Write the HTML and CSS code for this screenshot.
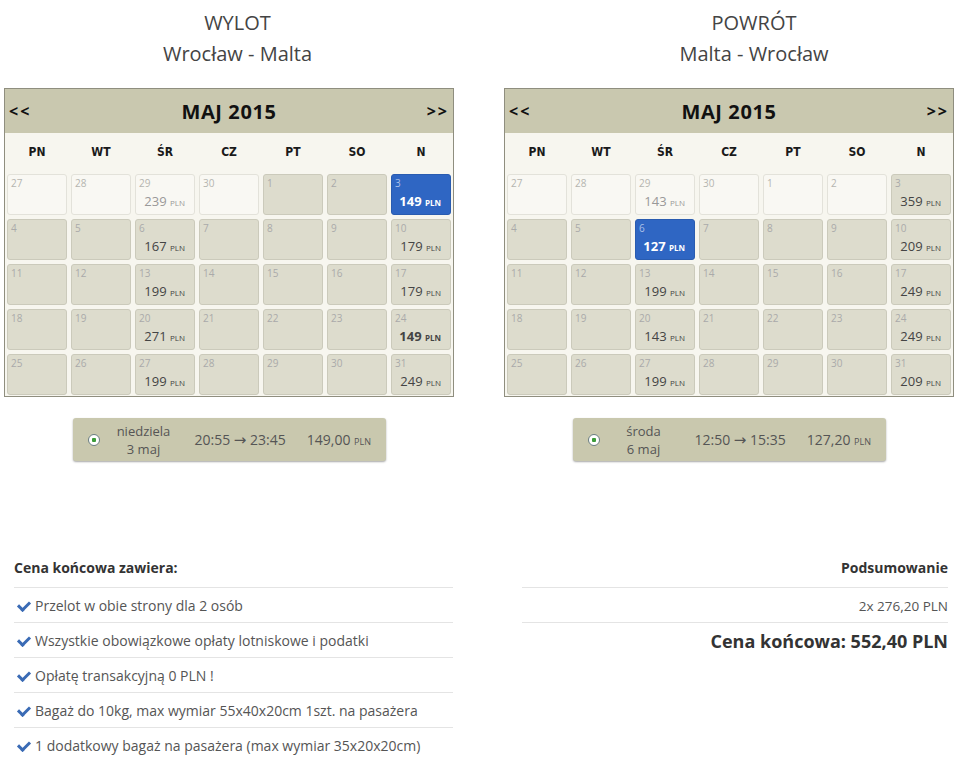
FILE: index.html
```html
<!DOCTYPE html>
<html lang="pl">
<head>
  <meta charset="UTF-8">
  <title>Rezerwacja lotu</title>
  <link rel="stylesheet" href="styles.css">
</head>
<body>

  <div class="flights">

    <!-- Wylot -->
    <div class="leg leg-out">
      <div class="leg-title">
        <div>WYLOT</div>
        <div>Wrocław - Malta</div>
      </div>
      <div class="calendar">
        <div class="cal-head">
          <span class="nav">&lt;&lt;</span>
          <span class="month">MAJ 2015</span>
          <span class="nav">&gt;&gt;</span>
        </div>
        <div class="days">
          <span>PN</span><span>WT</span><span>ŚR</span><span>CZ</span><span>PT</span><span>SO</span><span>N</span>
        </div>
        <div class="grid">
          <div class="cell off"><span class="num">27</span></div>
          <div class="cell off"><span class="num">28</span></div>
          <div class="cell off"><span class="num">29</span><span class="price">239 <small>PLN</small></span></div>
          <div class="cell off"><span class="num">30</span></div>
          <div class="cell"><span class="num">1</span></div>
          <div class="cell"><span class="num">2</span></div>
          <div class="cell sel"><span class="num">3</span><span class="price">149 <small>PLN</small></span></div>

          <div class="cell"><span class="num">4</span></div>
          <div class="cell"><span class="num">5</span></div>
          <div class="cell"><span class="num">6</span><span class="price">167 <small>PLN</small></span></div>
          <div class="cell"><span class="num">7</span></div>
          <div class="cell"><span class="num">8</span></div>
          <div class="cell"><span class="num">9</span></div>
          <div class="cell"><span class="num">10</span><span class="price">179 <small>PLN</small></span></div>

          <div class="cell"><span class="num">11</span></div>
          <div class="cell"><span class="num">12</span></div>
          <div class="cell"><span class="num">13</span><span class="price">199 <small>PLN</small></span></div>
          <div class="cell"><span class="num">14</span></div>
          <div class="cell"><span class="num">15</span></div>
          <div class="cell"><span class="num">16</span></div>
          <div class="cell"><span class="num">17</span><span class="price">179 <small>PLN</small></span></div>

          <div class="cell"><span class="num">18</span></div>
          <div class="cell"><span class="num">19</span></div>
          <div class="cell"><span class="num">20</span><span class="price">271 <small>PLN</small></span></div>
          <div class="cell"><span class="num">21</span></div>
          <div class="cell"><span class="num">22</span></div>
          <div class="cell"><span class="num">23</span></div>
          <div class="cell"><span class="num">24</span><span class="price cheap">149 <small>PLN</small></span></div>

          <div class="cell"><span class="num">25</span></div>
          <div class="cell"><span class="num">26</span></div>
          <div class="cell"><span class="num">27</span><span class="price">199 <small>PLN</small></span></div>
          <div class="cell"><span class="num">28</span></div>
          <div class="cell"><span class="num">29</span></div>
          <div class="cell"><span class="num">30</span></div>
          <div class="cell"><span class="num">31</span><span class="price">249 <small>PLN</small></span></div>
        </div>
      </div>

      <div class="flight">
        <span class="radio"></span>
        <span class="date"><span>niedziela</span><span>3 maj</span></span>
        <span class="time">20:55 <span class="arrow">&rarr;</span> 23:45</span>
        <span class="fare">149,00 <small>PLN</small></span>
      </div>
    </div>

    <!-- Powrot -->
    <div class="leg leg-back">
      <div class="leg-title">
        <div>POWRÓT</div>
        <div>Malta - Wrocław</div>
      </div>
      <div class="calendar">
        <div class="cal-head">
          <span class="nav">&lt;&lt;</span>
          <span class="month">MAJ 2015</span>
          <span class="nav">&gt;&gt;</span>
        </div>
        <div class="days">
          <span>PN</span><span>WT</span><span>ŚR</span><span>CZ</span><span>PT</span><span>SO</span><span>N</span>
        </div>
        <div class="grid">
          <div class="cell off"><span class="num">27</span></div>
          <div class="cell off"><span class="num">28</span></div>
          <div class="cell off"><span class="num">29</span><span class="price">143 <small>PLN</small></span></div>
          <div class="cell off"><span class="num">30</span></div>
          <div class="cell off"><span class="num">1</span></div>
          <div class="cell off"><span class="num">2</span></div>
          <div class="cell"><span class="num">3</span><span class="price">359 <small>PLN</small></span></div>

          <div class="cell"><span class="num">4</span></div>
          <div class="cell"><span class="num">5</span></div>
          <div class="cell sel"><span class="num">6</span><span class="price">127 <small>PLN</small></span></div>
          <div class="cell"><span class="num">7</span></div>
          <div class="cell"><span class="num">8</span></div>
          <div class="cell"><span class="num">9</span></div>
          <div class="cell"><span class="num">10</span><span class="price">209 <small>PLN</small></span></div>

          <div class="cell"><span class="num">11</span></div>
          <div class="cell"><span class="num">12</span></div>
          <div class="cell"><span class="num">13</span><span class="price">199 <small>PLN</small></span></div>
          <div class="cell"><span class="num">14</span></div>
          <div class="cell"><span class="num">15</span></div>
          <div class="cell"><span class="num">16</span></div>
          <div class="cell"><span class="num">17</span><span class="price">249 <small>PLN</small></span></div>

          <div class="cell"><span class="num">18</span></div>
          <div class="cell"><span class="num">19</span></div>
          <div class="cell"><span class="num">20</span><span class="price">143 <small>PLN</small></span></div>
          <div class="cell"><span class="num">21</span></div>
          <div class="cell"><span class="num">22</span></div>
          <div class="cell"><span class="num">23</span></div>
          <div class="cell"><span class="num">24</span><span class="price">249 <small>PLN</small></span></div>

          <div class="cell"><span class="num">25</span></div>
          <div class="cell"><span class="num">26</span></div>
          <div class="cell"><span class="num">27</span><span class="price">199 <small>PLN</small></span></div>
          <div class="cell"><span class="num">28</span></div>
          <div class="cell"><span class="num">29</span></div>
          <div class="cell"><span class="num">30</span></div>
          <div class="cell"><span class="num">31</span><span class="price">209 <small>PLN</small></span></div>
        </div>
      </div>

      <div class="flight">
        <span class="radio"></span>
        <span class="date"><span>środa</span><span>6 maj</span></span>
        <span class="time">12:50 <span class="arrow">&rarr;</span> 15:35</span>
        <span class="fare">127,20 <small>PLN</small></span>
      </div>
    </div>

  </div>

  <!-- Podsumowanie ceny -->
  <div class="summary">
    <div class="includes">
      <div class="sum-head">Cena końcowa zawiera:</div>
      <ul class="checks">
        <li>Przelot w obie strony dla 2 osób</li>
        <li>Wszystkie obowiązkowe opłaty lotniskowe i podatki</li>
        <li>Opłatę transakcyjną 0 PLN !</li>
        <li>Bagaż do 10kg, max wymiar 55x40x20cm 1szt. na pasażera</li>
        <li>1 dodatkowy bagaż na pasażera (max wymiar 35x20x20cm)</li>
      </ul>
    </div>
    <div class="totals">
      <div class="sum-head">Podsumowanie</div>
      <div class="per-person">2x 276,20 PLN</div>
      <div class="total">Cena końcowa: 552,40 PLN</div>
    </div>
  </div>

</body>
</html>
```

FILE: styles.css
```css
body {
  margin: 0;
  font-family: "Open Sans", sans-serif;
  color: #555;
  background: #fff;
}

.flights {
  display: flex;
}

.leg {
  width: 450px;
}

.leg-out {
  margin-left: 4px;
}

.leg-back {
  margin-left: 50px;
}

.leg-title {
  text-align: center;
  font-size: 20px;
  line-height: 31px;
  color: #444;
  padding-top: 7px;
  height: 81px;
}

.leg-out .leg-title {
  padding-left: 17px;
}

.leg-back .leg-title {
  padding-left: 50px;
}

.calendar {
  border: 1px solid #8f8e7f;
  background: #f7f6ef;
}

.cal-head {
  display: flex;
  justify-content: space-between;
  align-items: center;
  height: 44px;
  padding: 0 4px;
  background: #c9c8af;
  color: #111;
  font-weight: bold;
}

.nav {
  font-size: 16px;
  letter-spacing: 2px;
}

.month {
  font-size: 20px;
  letter-spacing: 0.6px;
}

.days {
  display: grid;
  grid-template-columns: repeat(7, 1fr);
  height: 38px;
  align-items: center;
  text-align: center;
  font-family: "DejaVu Sans Condensed", "DejaVu Sans", sans-serif;
  font-weight: bold;
  font-size: 12px;
  color: #1a1a1a;
}

.grid {
  display: grid;
  grid-template-columns: repeat(7, 60px);
  grid-auto-rows: 41px;
  gap: 4px;
  padding: 3px 2px 1px;
}

.cell {
  position: relative;
  background: #dddccd;
  border: 1px solid #cbcabb;
  border-radius: 3px;
  box-sizing: border-box;
}

.cell.off {
  background: #f9f8f3;
  border-color: #e3e2da;
}

.cell.sel {
  background: #2f66c3;
  border-color: #2a5cb0;
}

.num {
  position: absolute;
  left: 3px;
  top: 1px;
  font-size: 10px;
  color: #aaa;
}

.cell.off .num {
  color: #b5b5b0;
}

.cell.sel .num {
  color: #a9c0e8;
}

.price {
  position: absolute;
  right: 9px;
  bottom: 4px;
  font-size: 13px;
  color: #444;
}

.price small {
  font-size: 8px;
}

.cell.off .price {
  color: #999;
}

.price.cheap {
  font-weight: bold;
}

.cell.sel .price {
  color: #fff;
  font-weight: bold;
}

.flight {
  display: flex;
  align-items: center;
  width: 313px;
  height: 43px;
  box-sizing: border-box;
  margin: 21px auto 0;
  padding-left: 15px;
  background: #c9c8ae;
  border-radius: 3px;
  box-shadow: 0 1px 2px rgba(0,0,0,0.35);
  font-size: 14px;
  color: #555;
}

.radio {
  flex: none;
  width: 10px;
  height: 10px;
  border: 1px solid #6b7f84;
  border-radius: 50%;
  background: radial-gradient(circle, #3b9c3a 0, #3b9c3a 2px, #fff 2.5px);
}

.date {
  display: flex;
  flex-direction: column;
  width: 76px;
  text-align: center;
  font-size: 13px;
  line-height: 18px;
  margin-left: 6px;
}

.time {
  margin-left: 13px;
}

.arrow {
  font-family: "DejaVu Sans", sans-serif;
  font-size: 15px;
}

.fare {
  margin-left: 21px;
}

.fare small {
  font-size: 9px;
}

.summary {
  display: flex;
  justify-content: space-between;
  padding: 94px 10px 0 14px;
}

.includes {
  width: 439px;
}

.totals {
  width: 426px;
  text-align: right;
}

.sum-head {
  font-size: 14px;
  font-weight: bold;
  color: #333;
  line-height: 20px;
  padding: 3px 0 9px;
  border-bottom: 1px solid #e4e4e4;
}

.checks {
  list-style: none;
  margin: 0;
  padding: 0;
}

.checks li {
  position: relative;
  height: 34px;
  line-height: 36px;
  padding-left: 21px;
  font-size: 14px;
  border-bottom: 1px solid #e4e4e4;
}

.checks li:last-child {
  border-bottom: none;
}

.checks li::before {
  content: "";
  position: absolute;
  left: 4px;
  top: 13px;
  width: 9px;
  height: 5px;
  border-left: 3px solid #3a6bb5;
  border-bottom: 3px solid #3a6bb5;
  transform: rotate(-45deg);
}

.per-person {
  height: 34px;
  line-height: 36px;
  font-size: 13.5px;
  border-bottom: 1px solid #e4e4e4;
}

.total {
  font-size: 18px;
  font-weight: bold;
  color: #333;
  line-height: 36px;
}
```
